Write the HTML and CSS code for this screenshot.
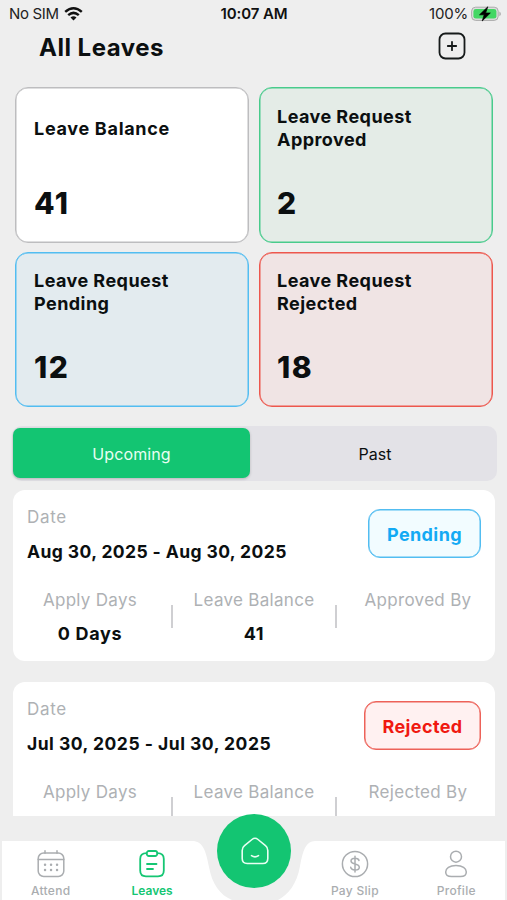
FILE: index.html
```html
<!DOCTYPE html>
<html lang="en">
<head>
<meta charset="utf-8">
<title>All Leaves</title>
<link rel="stylesheet" href="styles.css">
</head>
<body>
<div class="status">
  <div class="carrier"><span>No SIM</span>
    <svg width="19" height="14" viewBox="0 0 19 14"><g fill="none" stroke="#111" stroke-width="2.5"><path d="M1.2 4.9Q9.5-2.3 17.8 4.9"/><path d="M4.2 8.1Q9.5 3.6 14.8 8.1"/></g><path d="M6.5 10.4Q9.5 8 12.5 10.4L9.5 13.6Z" fill="#111"/></svg>
  </div>
  <div class="clock">10:07 AM</div>
  <div class="battery"><span>100%</span>
    <svg width="30" height="16" viewBox="0 0 30 16"><rect x=".6" y="1.2" width="26.6" height="13.2" rx="4" fill="#ddd" stroke="#aaa"/><rect x="2.4" y="3" width="23" height="9.6" rx="2.4" fill="#43d764"/><path d="M28.4 5.6v4.6q1.5-.8 1.5-2.3t-1.5-2.3" fill="#aaa"/><path d="M16.8.8L8.5 8.8h4.7L11.2 15l8.1-8h-4.7Z" fill="#000" stroke="#000" stroke-width=".7"/></svg>
  </div>
</div>
<header class="header">
  <h1>All Leaves</h1>
  <svg width="28" height="28" viewBox="0 0 28 28" fill="none" stroke="#161a1a" stroke-width="1.8"><rect x="1.5" y="1.5" width="25" height="25" rx="6"/><path d="M14 9.8v8.4M9.8 14h8.4" stroke-linecap="round"/></svg>
</header>
<section class="stats">
  <article class="stat balance"><h2>Leave Balance</h2><p>41</p></article>
  <article class="stat approved"><h2>Leave Request<br>Approved</h2><p>2</p></article>
  <article class="stat pending"><h2>Leave Request<br>Pending</h2><p>12</p></article>
  <article class="stat rejected"><h2>Leave Request<br>Rejected</h2><p>18</p></article>
</section>
<div class="tabs"><div class="tab active">Upcoming</div><div class="tab past">Past</div></div>
<main class="list">
  <article class="card">
    <div class="top"><div><div class="label">Date</div><div class="range">Aug 30, 2025 - Aug 30, 2025</div></div><div class="badge blue">Pending</div></div>
    <div class="cols">
      <div><span class="label">Apply Days</span><b>0 Days</b></div>
      <div><span class="label">Leave Balance</span><b>41</b></div>
      <div><span class="label">Approved By</span></div>
    </div>
  </article>
  <article class="card">
    <div class="top"><div><div class="label">Date</div><div class="range jul">Jul 30, 2025 - Jul 30, 2025</div></div><div class="badge red">Rejected</div></div>
    <div class="cols">
      <div><span class="label">Apply Days</span></div>
      <div><span class="label">Leave Balance</span></div>
      <div><span class="label">Rejected By</span></div>
    </div>
  </article>
</main>
<nav class="nav">
  <svg class="nav-shape" width="507" height="59" viewBox="0 0 507 59"><path d="M2 0H192C203 0 206 10 209 26C212 43 220 54 232 59H2ZM505 0H315C306 0 303 9 300 25C297 43 288 54 278 59H505Z" fill="#fff"/></svg>
  <div class="item"><svg width="28" height="28" viewBox="0 0 28 28" fill="none" stroke="#aaadb0" stroke-width="1.5"><rect x="1.2" y="3" width="25.6" height="23.5" rx="5.5"/><path d="M1.2 9.6h25.6M8 .8v2.4M20 .8v2.4" stroke-linecap="round"/><path d="M8 14.8h.1M14 14.8h.1M20 14.8h.1M8 20h.1M14 20h.1M20 20h.1" stroke-width="2.4" stroke-linecap="round"/></svg><span>Attend</span></div>
  <div class="item on"><svg width="28" height="28" viewBox="0 0 28 28" fill="none" stroke="#15c673" stroke-width="1.8" stroke-linecap="round"><path d="M8.5 3.2C4 3.2 2.2 5 2.2 9V20.5q0 5.8 5.8 5.8h12q5.8 0 5.8-5.8V9c0-4-1.8-5.8-6.3-5.8"/><rect x="8.8" y="1" width="10.4" height="5" rx="2"/><path d="M9 14h9.5M9 19h6"/></svg><span>Leaves</span></div>
  <div class="item"></div>
  <div class="item"><svg width="28" height="28" viewBox="0 0 28 28" fill="none" stroke="#aaadb0" stroke-width="1.5"><circle cx="14" cy="14" r="12.6"/><path d="M18 10.5C17.6 8.7 16 8.2 14 8.2C11.5 8.2 10 9.3 10 11C10 12.9 11.8 13.4 14 13.9S18.3 15.1 18.3 17.2C18.3 19 16.5 20 14 20S10 19.2 9.7 17.2M14 6.2v15.8" stroke-linecap="round"/></svg><span>Pay Slip</span></div>
  <div class="item"><svg width="28" height="28" viewBox="0 0 28 28" fill="none" stroke="#aaadb0" stroke-width="1.5"><circle cx="14" cy="6.7" r="5.5"/><path d="M14 15.4C7.5 15.4 3.7 18.3 3.7 22C3.7 25.5 6 26.6 9.5 26.6h9C22 26.6 24.3 25.5 24.3 22C24.3 18.3 20.5 15.4 14 15.4Z"/></svg><span>Profile</span></div>
  <div class="fab"><svg width="28" height="28" viewBox="0 0 28 28" fill="none" stroke="#e9fff3" stroke-width="1.6" stroke-linecap="round" stroke-linejoin="round"><path d="M1.2 13.5q0-3 2.3-4.8L11 2.5q3-2.4 6 0L24.5 8.7q2.3 1.8 2.3 4.8v8q0 5-5 5H6.2q-5 0-5-5ZM10.5 18.7q3.5 2.4 7 0"/></svg></div>
</nav>
</body>
</html>
```
FILE: styles.css
```css
* { box-sizing: border-box; margin: 0; padding: 0; }
body { width: 507px; height: 900px; overflow: hidden; background: #eee; color: #0b0f10; font-family: Inter, "Liberation Sans", sans-serif; display: flex; flex-direction: column; }
svg { display: block; flex: none; }
.status { height: 28px; padding: 0 6px 0 9px; display: grid; grid-template-columns: 1fr auto 1fr; align-items: center; font-size: 15px; line-height: 28px; color: #222; }
.carrier, .battery { display: flex; align-items: center; gap: 5px; letter-spacing: -.35px; }
.battery { justify-content: flex-end; gap: 3px; letter-spacing: -.2px; }
.clock { font-weight: 600; color: #111; letter-spacing: -.1px; margin-left: -2px; }
.header { height: 59px; padding: 4px 41px 0 39px; display: flex; justify-content: space-between; align-items: flex-start; }
.header h1 { font-size: 24px; line-height: 31px; font-weight: 700; letter-spacing: .5px; }
.stats { padding: 0 14px 0 15px; display: grid; grid-template-columns: 234px 234px; grid-auto-rows: 155.5px; justify-content: space-between; row-gap: 9px; }
.stat { border: 1px solid #bdbdbf; box-shadow: inset 0 0 0 .5px #bdbdbf; border-radius: 13px; background: #fff; padding: 17px 18px 20px; display: flex; flex-direction: column; justify-content: space-between; }
.stat h2 { height: 46px; display: flex; align-items: center; font-size: 18px; line-height: 23px; font-weight: 650; letter-spacing: .45px; }
.balance h2 { letter-spacing: .7px; }
.stat p { font-size: 30px; line-height: 38px; font-weight: 800; letter-spacing: 1.5px; }
.approved { background: #e4ece7; border-color: #48cb8c; box-shadow: inset 0 0 0 .5px #48cb8c; }
.pending { background: #e3ebef; border-color: #52bdf1; box-shadow: inset 0 0 0 .5px #52bdf1; }
.rejected { background: #f0e4e4; border-color: #ed574d; box-shadow: inset 0 0 0 .5px #ed574d; }
.approved h2, .rejected h2 { margin-left: -1px; }
.approved p, .rejected p { margin-left: -1px; }
.pending, .rejected { padding-top: 16px; }
.tabs { height: 55px; margin: 19px 10px 0 12px; padding: 2px 1px; flex: none; display: flex; background: #e3e2e7; border-radius: 10px; font-size: 16px; line-height: 52px; text-align: center; }
.tab { height: 50px; width: 237px; }
.active { background: #13c572; color: #e9fff3; border-radius: 7px; box-shadow: 0 1px 3px #0003; letter-spacing: .1px; }
.past { flex: 1; padding-left: 4px; }
.list { height: 335px; flex: none; overflow: hidden; padding: 9px 12px 0 13px; }
.card { height: 171px; border-radius: 12px; background: #fff; padding: 15px 14px; margin-bottom: 21px; }
.top { height: 83px; display: flex; justify-content: space-between; }
.label { color: #aeb1b4; font-size: 17px; line-height: 24px; font-weight: 400; letter-spacing: .3px; }
.top .label { letter-spacing: .7px; }
.range { margin-top: 11px; font-size: 17.5px; line-height: 24px; font-weight: 650; white-space: nowrap; letter-spacing: .4px; }
.jul { letter-spacing: .5px; }
.badge { height: 49px; margin-top: 4px; border: 1px solid; border-radius: 12px; text-align: center; font-size: 18px; line-height: 49px; font-weight: 700; letter-spacing: .4px; }
.blue { width: 113px; color: #13aaf4; background: #f2fcff; border-color: #52bdf1; box-shadow: inset 0 0 0 .5px #52bdf1; }
.red { width: 117px; color: #f01910; background: #fff1f1; border-color: #ed6259; box-shadow: inset 0 0 0 .5px #ed6259; }
.cols { margin: 0 -18px 0 -20px; display: grid; grid-template-columns: repeat(3, 1fr); text-align: center; }
.cols > div { height: 60px; padding-left: 2px; display: flex; flex-direction: column; gap: 10px; }
.cols > div + div { background: linear-gradient(#cfcfd2, #cfcfd2) 0 17px / 2px 23px no-repeat; }
.cols b { font-size: 18px; line-height: 24px; font-weight: 650; letter-spacing: .7px; }
.nav { position: relative; height: 59px; margin-top: 25px; flex: none; display: grid; grid-template-columns: repeat(5, 1fr); }
.nav-shape { position: absolute; left: 0; top: 0; }
.item { position: relative; padding-top: 9px; display: flex; flex-direction: column; align-items: center; gap: 5px; color: #aaadb0; font-size: 12px; line-height: 16px; font-weight: 500; letter-spacing: .3px; }
.on { color: #15c673; font-weight: 600; letter-spacing: 0; }
.fab { position: absolute; left: 217px; top: -27px; width: 74px; height: 74px; padding-left: 2px; border-radius: 50%; background: #13c572; display: grid; place-items: center; }
```
